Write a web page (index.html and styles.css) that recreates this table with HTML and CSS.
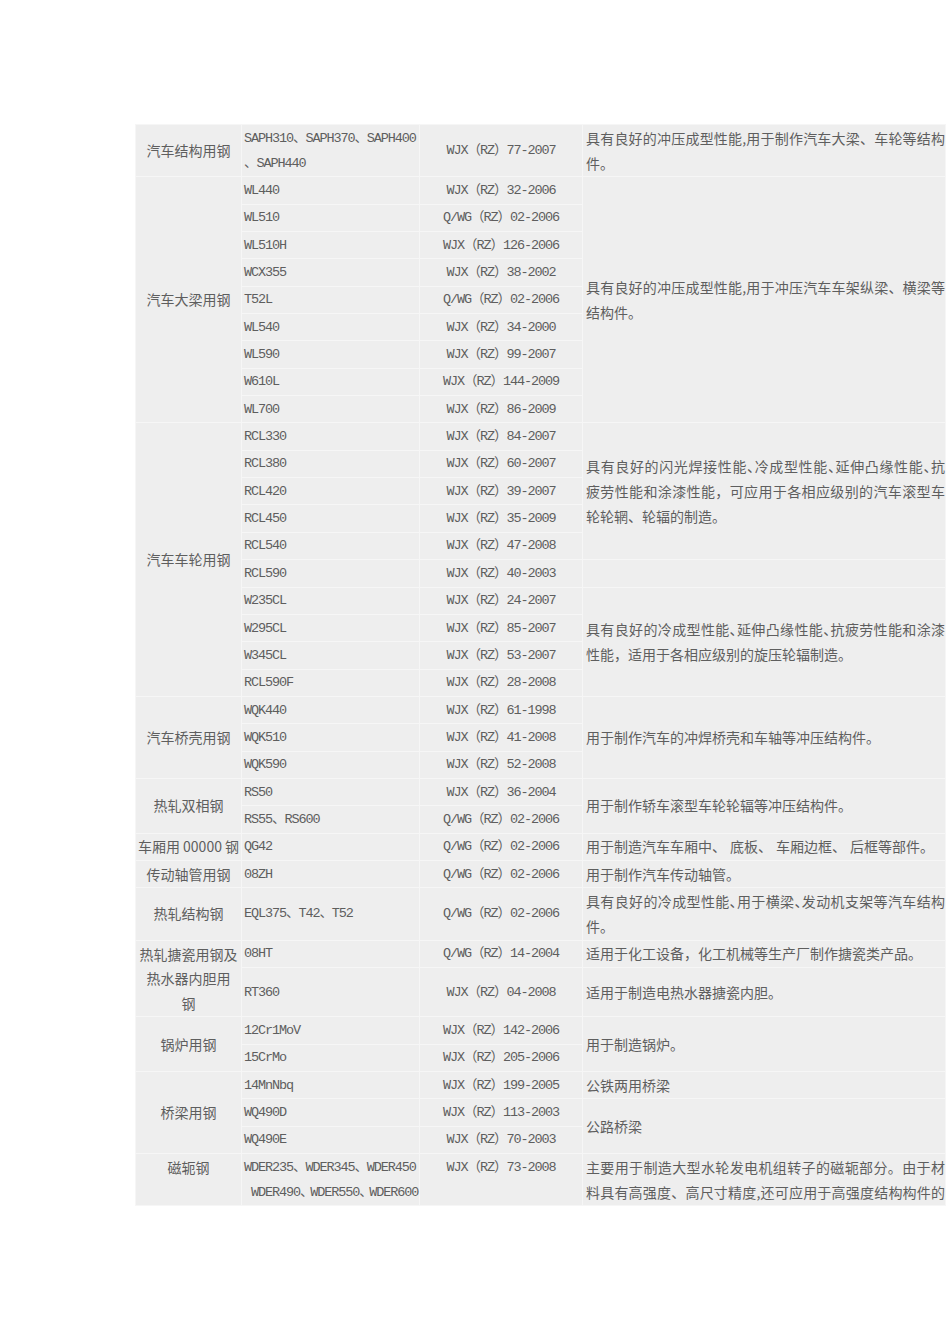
FILE: index.html
```html
<!DOCTYPE html>
<html lang="zh-CN">
<head>
<meta charset="utf-8">
<title>汽车用钢</title>
<link rel="stylesheet" href="styles.css">
</head>
<body>
<div class="page">
<table class="spec">
<colgroup>
<col class="c1"><col class="c2"><col class="c3"><col class="c4">
</colgroup>
<tbody>
<tr>
  <td class="name">汽车结构用钢</td>
  <td class="grade">SAPH310、SAPH370、SAPH400<br>、SAPH440</td>
  <td class="std">WJX（RZ）77-2007</td>
  <td class="desc"><span class="ln">具有良好的冲压成型性能,用于制作汽车大梁、车轮等结构</span>件。</td>
</tr>
<tr>
  <td class="name" rowspan="9">汽车大梁用钢</td>
  <td class="grade">WL440</td>
  <td class="std">WJX（RZ）32-2006</td>
  <td class="desc" rowspan="9"><span class="ln">具有良好的冲压成型性能,用于冲压汽车车架纵梁、横梁等</span>结构件。</td>
</tr>
<tr><td class="grade">WL510</td><td class="std">Q/WG（RZ）02-2006</td></tr>
<tr><td class="grade">WL510H</td><td class="std">WJX（RZ）126-2006</td></tr>
<tr><td class="grade">WCX355</td><td class="std">WJX（RZ）38-2002</td></tr>
<tr><td class="grade">T52L</td><td class="std">Q/WG（RZ）02-2006</td></tr>
<tr><td class="grade">WL540</td><td class="std">WJX（RZ）34-2000</td></tr>
<tr><td class="grade">WL590</td><td class="std">WJX（RZ）99-2007</td></tr>
<tr><td class="grade">W610L</td><td class="std">WJX（RZ）144-2009</td></tr>
<tr><td class="grade">WL700</td><td class="std">WJX（RZ）86-2009</td></tr>
<tr>
  <td class="name" rowspan="10">汽车车轮用钢</td>
  <td class="grade">RCL330</td>
  <td class="std">WJX（RZ）84-2007</td>
  <td class="desc" rowspan="5"><span class="ln">具有良好的闪光焊接性能<span class="h">、</span>冷成型性能<span class="h">、</span>延伸凸缘性能<span class="h">、</span>抗</span><span class="ln">疲劳性能和涂漆性能，可应用于各相应级别的汽车滚型车</span>轮轮辋、轮辐的制造。</td>
</tr>
<tr><td class="grade">RCL380</td><td class="std">WJX（RZ）60-2007</td></tr>
<tr><td class="grade">RCL420</td><td class="std">WJX（RZ）39-2007</td></tr>
<tr><td class="grade">RCL450</td><td class="std">WJX（RZ）35-2009</td></tr>
<tr><td class="grade">RCL540</td><td class="std">WJX（RZ）47-2008</td></tr>
<tr><td class="grade">RCL590</td><td class="std">WJX（RZ）40-2003</td><td class="desc"></td></tr>
<tr>
  <td class="grade">W235CL</td>
  <td class="std">WJX（RZ）24-2007</td>
  <td class="desc" rowspan="4"><span class="ln">具有良好的冷成型性能<span class="h">、</span>延伸凸缘性能<span class="h">、</span>抗疲劳性能和涂漆</span>性能，适用于各相应级别的旋压轮辐制造。</td>
</tr>
<tr><td class="grade">W295CL</td><td class="std">WJX（RZ）85-2007</td></tr>
<tr><td class="grade">W345CL</td><td class="std">WJX（RZ）53-2007</td></tr>
<tr><td class="grade">RCL590F</td><td class="std">WJX（RZ）28-2008</td></tr>
<tr>
  <td class="name" rowspan="3">汽车桥壳用钢</td>
  <td class="grade">WQK440</td>
  <td class="std">WJX（RZ）61-1998</td>
  <td class="desc" rowspan="3">用于制作汽车的冲焊桥壳和车轴等冲压结构件。</td>
</tr>
<tr><td class="grade">WQK510</td><td class="std">WJX（RZ）41-2008</td></tr>
<tr><td class="grade">WQK590</td><td class="std">WJX（RZ）52-2008</td></tr>
<tr>
  <td class="name" rowspan="2">热轧双相钢</td>
  <td class="grade">RS50</td>
  <td class="std">WJX（RZ）36-2004</td>
  <td class="desc" rowspan="2">用于制作轿车滚型车轮轮辐等冲压结构件。</td>
</tr>
<tr><td class="grade">RS55、RS600</td><td class="std">Q/WG（RZ）02-2006</td></tr>
<tr>
  <td class="name nowrap">车厢用 00000 钢</td>
  <td class="grade">QG42</td>
  <td class="std">Q/WG（RZ）02-2006</td>
  <td class="desc">用于制造汽车车厢中<span class="w">、</span>底板<span class="w">、</span>车厢边框<span class="w">、</span>后框等部件。</td>
</tr>
<tr>
  <td class="name">传动轴管用钢</td>
  <td class="grade">08ZH</td>
  <td class="std">Q/WG（RZ）02-2006</td>
  <td class="desc">用于制作汽车传动轴管。</td>
</tr>
<tr>
  <td class="name">热轧结构钢</td>
  <td class="grade">EQL375、T42、T52</td>
  <td class="std">Q/WG（RZ）02-2006</td>
  <td class="desc"><span class="ln">具有良好的冷成型性能<span class="h">、</span>用于横梁<span class="h">、</span>发动机支架等汽车结构</span>件。</td>
</tr>
<tr>
  <td class="name tight" rowspan="2">热轧搪瓷用钢及<br>热水器内胆用<br>钢</td>
  <td class="grade">08HT</td>
  <td class="std">Q/WG（RZ）14-2004</td>
  <td class="desc">适用于化工设备，化工机械等生产厂制作搪瓷类产品。</td>
</tr>
<tr class="tall">
  <td class="grade">RT360</td>
  <td class="std">WJX（RZ）04-2008</td>
  <td class="desc">适用于制造电热水器搪瓷内胆。</td>
</tr>
<tr>
  <td class="name" rowspan="2">锅炉用钢</td>
  <td class="grade">12Cr1MoV</td>
  <td class="std">WJX（RZ）142-2006</td>
  <td class="desc" rowspan="2">用于制造锅炉。</td>
</tr>
<tr><td class="grade">15CrMo</td><td class="std">WJX（RZ）205-2006</td></tr>
<tr>
  <td class="name" rowspan="3">桥梁用钢</td>
  <td class="grade">14MnNbq</td>
  <td class="std">WJX（RZ）199-2005</td>
  <td class="desc">公铁两用桥梁</td>
</tr>
<tr>
  <td class="grade">WQ490D</td>
  <td class="std">WJX（RZ）113-2003</td>
  <td class="desc" rowspan="2">公路桥梁</td>
</tr>
<tr><td class="grade">WQ490E</td><td class="std">WJX（RZ）70-2003</td></tr>
<tr class="cut">
  <td class="name">磁轭钢</td>
  <td class="grade">WDER235、WDER345、WDER450<br><span class="indent">WDER490<span class="n">、</span>WDER550<span class="n">、</span>WDER600</span></td>
  <td class="std">WJX（RZ）73-2008</td>
  <td class="desc"><span class="ln">主要用于制造大型水轮发电机组转子的磁轭部分。由于材</span><span class="ln">料具有高强度、高尺寸精度,还可应用于高强度结构构件的</span></td>
</tr>
</tbody>
</table>
</div>
</body>
</html>
```

FILE: styles.css
```css
html, body {
  margin: 0;
  padding: 0;
  background: #ffffff;
}

.page {
  padding: 124px 0 0 135px;
}

.spec {
  border-collapse: collapse;
  table-layout: fixed;
  width: 810px;
  font-family: "Noto Sans CJK SC", sans-serif;
  font-size: 14px;
  color: #5e5e5e;
}

.c1 { width: 106px; }
.c2 { width: 178px; }
.c3 { width: 163px; }
.c4 { width: 363px; }

.spec td {
  background: #eeeeee;
  border: 1px solid #f6f6f6;
  padding: 0.68px 2px;
  line-height: 25px;
  vertical-align: middle;
  overflow: visible;
}

.spec td.name {
  text-align: center;
}

.spec td.nowrap {
  white-space: nowrap;
  padding: 0.68px 0;
}

.spec td.tight {
  line-height: 24.5px;
}

.spec tr.tall td {
  height: 47px;
}

.spec td.grade,
.spec td.std {
  font-family: "Liberation Mono", "Noto Sans CJK SC", monospace;
  font-size: 13.5px;
  letter-spacing: -1.1px;
  white-space: nowrap;
}

.spec td.grade {
  text-align: left;
}

.spec td.std {
  text-align: center;
}

.spec td.desc {
  text-align: left;
  padding: 0.68px 0 0.68px 3px;
  white-space: nowrap;
}

.ln {
  display: block;
  white-space: normal;
  text-align: justify;
  text-align-last: justify;
}

.h {
  font-feature-settings: "halt";
}

.n {
  letter-spacing: -3.4px;
}

.w {
  margin-right: 4px;
}

.indent {
  padding-left: 7px;
}

.spec tr.cut td {
  vertical-align: top;
}
```
